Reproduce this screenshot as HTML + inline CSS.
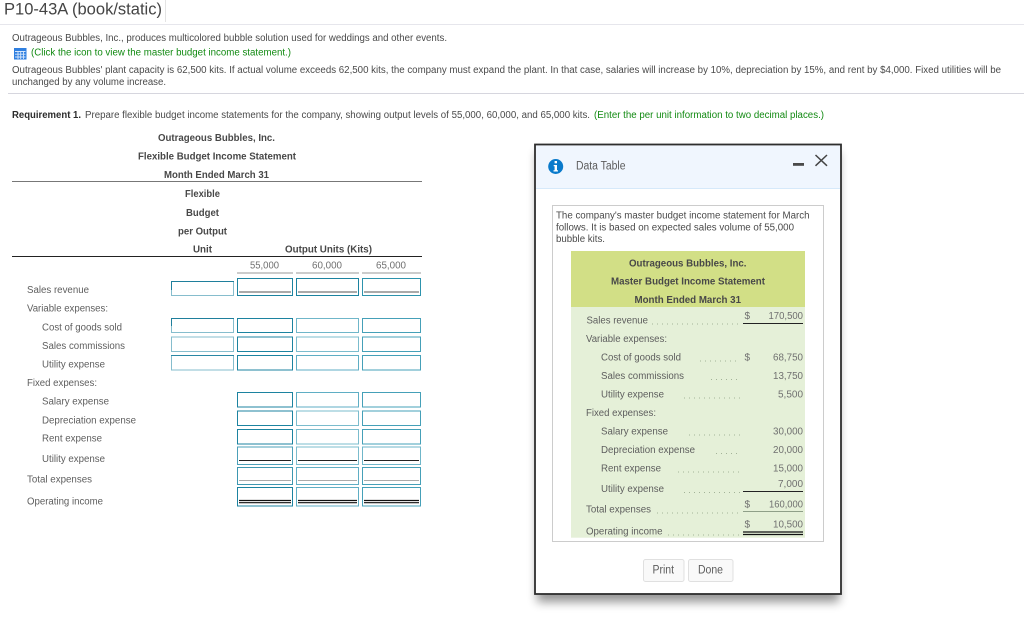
<!DOCTYPE html>
<html><head><meta charset="utf-8"><style>
html,body{margin:0;padding:0;background:#fff;width:1024px;height:640px;overflow:hidden}
svg{display:block;filter:blur(0.32px)}
text{font-family:"Liberation Sans",sans-serif;font-size:10px;fill:#4a4a4a}
.b{font-weight:bold;fill:#484848}
.g{fill:#128a12}
.l{fill:#5e5e5e}
.n{fill:#707070}
.d{stroke:#a3b398;stroke-width:1;stroke-dasharray:1 4;fill:none}
</style></head><body>
<svg width="1024" height="640" viewBox="0 0 1024 640" xmlns="http://www.w3.org/2000/svg">
<rect width="1024" height="640" fill="#fff"/>
<text x="4" y="14.5" style="font-size:17px;fill:#444" textLength="158" lengthAdjust="spacingAndGlyphs">P10-43A (book/static)</text>
<rect x="165" y="0" width="1" height="22" fill="#e4e4e4"/>
<rect x="0" y="24" width="1024" height="1" fill="#e6e6ec"/>
<text x="12" y="41" textLength="435" lengthAdjust="spacingAndGlyphs">Outrageous Bubbles, Inc., produces multicolored bubble solution used for weddings and other events.</text>
<g>
<rect x="14" y="48" width="12.500" height="11.500" fill="#2f7fe0"/>
<path d="M15 51.500H25.500M15 54.200H25.500M15 57H25.500M18 51V59M20.700 51V59M23.500 51V59" stroke="#d5e6fb" stroke-width=".9" fill="none"/>
</g>
<text class="g" x="31" y="55.500" textLength="260" lengthAdjust="spacingAndGlyphs">(Click the icon to view the master budget income statement.)</text>
<text x="12" y="73" textLength="989" lengthAdjust="spacingAndGlyphs">Outrageous Bubbles' plant capacity is 62,500 kits. If actual volume exceeds 62,500 kits, the company must expand the plant. In that case, salaries will increase by 10%, depreciation by 15%, and rent by $4,000. Fixed utilities will be</text>
<text x="12" y="85" textLength="154" lengthAdjust="spacingAndGlyphs">unchanged by any volume increase.</text>
<rect x="8" y="93" width="1016" height="1" fill="#d6d6de"/>
<text class="b" x="12" y="118" textLength="69" lengthAdjust="spacingAndGlyphs" style="fill:#2c2c2c">Requirement 1.</text>
<text x="85" y="118" textLength="505" lengthAdjust="spacingAndGlyphs">Prepare flexible budget income statements for the company, showing output levels of 55,000, 60,000, and 65,000 kits.</text>
<text class="g" x="594" y="118" textLength="230" lengthAdjust="spacingAndGlyphs">(Enter the per unit information to two decimal places.)</text>

<text class="b" x="158" y="141" textLength="117" lengthAdjust="spacingAndGlyphs">Outrageous Bubbles, Inc.</text>
<text class="b" x="138" y="159.500" textLength="158" lengthAdjust="spacingAndGlyphs">Flexible Budget Income Statement</text>
<text class="b" x="164" y="178" textLength="105" lengthAdjust="spacingAndGlyphs">Month Ended March 31</text>
<rect x="12" y="181" width="410" height="1" fill="#777"/>
<text class="b" x="185" y="197" textLength="35" lengthAdjust="spacingAndGlyphs">Flexible</text>
<text class="b" x="186" y="216" textLength="33" lengthAdjust="spacingAndGlyphs">Budget</text>
<text class="b" x="178" y="234.500" textLength="49" lengthAdjust="spacingAndGlyphs">per Output</text>
<text class="b" x="193" y="252.500" textLength="19" lengthAdjust="spacingAndGlyphs">Unit</text>
<text class="b" x="285" y="252.500" textLength="87" lengthAdjust="spacingAndGlyphs">Output Units (Kits)</text>
<rect x="12" y="256" width="410" height="1" fill="#222"/>
<text class="n" x="250" y="268.700" textLength="29" lengthAdjust="spacingAndGlyphs">55,000</text>
<text class="n" x="312" y="268.700" textLength="30" lengthAdjust="spacingAndGlyphs">60,000</text>
<text class="n" x="376" y="268.700" textLength="30" lengthAdjust="spacingAndGlyphs">65,000</text>
<path d="M237 273H293M296 273H359M362 273H421" stroke="#999" stroke-width="1"/>

<text class="l" x="27" y="293" textLength="62" lengthAdjust="spacingAndGlyphs">Sales revenue</text>
<text class="l" x="27" y="311.700" textLength="81" lengthAdjust="spacingAndGlyphs">Variable expenses:</text>
<text class="l" x="42" y="330.700" textLength="80" lengthAdjust="spacingAndGlyphs">Cost of goods sold</text>
<text class="l" x="42" y="349" textLength="83" lengthAdjust="spacingAndGlyphs">Sales commissions</text>
<text class="l" x="42" y="367.700" textLength="63" lengthAdjust="spacingAndGlyphs">Utility expense</text>
<text class="l" x="27" y="386" textLength="70" lengthAdjust="spacingAndGlyphs">Fixed expenses:</text>
<text class="l" x="42" y="404.700" textLength="67" lengthAdjust="spacingAndGlyphs">Salary expense</text>
<text class="l" x="42" y="423.300" textLength="94" lengthAdjust="spacingAndGlyphs">Depreciation expense</text>
<text class="l" x="42" y="441.700" textLength="60" lengthAdjust="spacingAndGlyphs">Rent expense</text>
<text class="l" x="42" y="462" textLength="63" lengthAdjust="spacingAndGlyphs">Utility expense</text>
<text class="l" x="27" y="482.300" textLength="65" lengthAdjust="spacingAndGlyphs">Total expenses</text>
<text class="l" x="27" y="504.300" textLength="76" lengthAdjust="spacingAndGlyphs">Operating income</text>

<g fill="none">
<rect x="171.500" y="281.500" width="62" height="14" stroke="#86bdcd"/><path d="M171 281.500H234M171.500 281V290" stroke="#1f7f9c"/>
<rect x="171.500" y="318.500" width="62" height="14" stroke="#86bdcd"/><path d="M171 318.500H234M171.500 318V326" stroke="#1f7f9c"/>
<rect x="171.500" y="337" width="62" height="14.500" stroke="#86bdcd"/>
<rect x="171.500" y="355.500" width="62" height="14.500" stroke="#86bdcd"/><path d="M171 355.500H234" stroke="#2a87a4"/>

<rect x="237.500" y="278.500" width="55" height="17" stroke="#1c83a0"/>
<rect x="296.500" y="278.500" width="62" height="17" stroke="#1c83a0"/>
<rect x="362.500" y="278.500" width="58" height="17" stroke="#2d93ad"/>
<path d="M239 292H291M298 292H357M364 292H419" stroke="#555"/>

<rect x="237.500" y="318.500" width="55" height="14" stroke="#1c83a0"/>
<rect x="296.500" y="318.500" width="62" height="14" stroke="#6fb6c9"/>
<rect x="362.500" y="318.500" width="58" height="14" stroke="#45a0b8"/>

<rect x="237.500" y="337" width="55" height="14.500" stroke="#1c83a0"/>
<rect x="296.500" y="337" width="62" height="14.500" stroke="#7bbccd"/>
<rect x="362.500" y="337" width="58" height="14.500" stroke="#45a0b8"/>

<rect x="237.500" y="355.500" width="55" height="14.500" stroke="#1c83a0"/>
<rect x="296.500" y="355.500" width="62" height="14.500" stroke="#5faec4"/>
<rect x="362.500" y="355.500" width="58" height="14.500" stroke="#45a0b8"/>

<rect x="237.500" y="392.500" width="55" height="14.500" stroke="#1c83a0"/>
<rect x="296.500" y="392.500" width="62" height="14.500" stroke="#5faec4"/>
<rect x="362.500" y="392.500" width="58" height="14.500" stroke="#45a0b8"/>

<rect x="237.500" y="411" width="55" height="14.500" stroke="#1c83a0"/>
<rect x="296.500" y="411" width="62" height="14.500" stroke="#7bbccd"/>
<rect x="362.500" y="411" width="58" height="14.500" stroke="#45a0b8"/>

<rect x="237.500" y="429.500" width="55" height="14.500" stroke="#1c83a0"/>
<rect x="296.500" y="429.500" width="62" height="14.500" stroke="#7bbccd"/>
<rect x="362.500" y="429.500" width="58" height="14.500" stroke="#45a0b8"/>

<rect x="237.500" y="447" width="55" height="17.500" stroke="#4ca0b8"/>
<rect x="296.500" y="447" width="62" height="17.500" stroke="#7bbccd"/>
<rect x="362.500" y="447" width="58" height="17.500" stroke="#6fb6c9"/>
<path d="M239 460.500H291M298 460.500H357M364 460.500H419" stroke="#222"/>

<rect x="237.500" y="467.500" width="55" height="17" stroke="#3d97b0"/>
<rect x="296.500" y="467.500" width="62" height="17" stroke="#5faec4"/>
<rect x="362.500" y="467.500" width="58" height="17" stroke="#45a0b8"/>
<path d="M239 480.500H291M298 480.500H357M364 480.500H419" stroke="#aaa"/>

<rect x="237.500" y="487.500" width="55" height="18.500" stroke="#1c83a0"/>
<rect x="296.500" y="487.500" width="62" height="18.500" stroke="#5faec4"/>
<rect x="362.500" y="487.500" width="58" height="18.500" stroke="#45a0b8"/>
<path d="M239 500.500H291M298 500.500H357M364 500.500H419M239 502.700H291M298 502.700H357M364 502.700H419" stroke="#111" stroke-width="1.200"/>
</g>

<defs><filter id="sh" x="-10%" y="-10%" width="120%" height="120%"><feGaussianBlur stdDeviation="5"/></filter></defs>
<rect x="537" y="152" width="302" height="450" fill="#000" opacity=".42" filter="url(#sh)"/>
<rect x="535" y="144.500" width="306" height="449.500" fill="#fff" stroke="#2e2e2e" stroke-width="1.800"/>
<rect x="536" y="145.500" width="304" height="42.500" fill="#f0f6fe"/>
<rect x="536" y="188" width="304" height="1" fill="#d6e9fa"/>
<circle cx="555.700" cy="166.500" r="7.500" fill="#0a7acb"/>
<rect x="554.600" y="161" width="2.400" height="2.300" fill="#fff"/>
<path d="M553.700 165H557V170.200H558V171.500H553.500V170.200H554.600V166.200H553.700Z" fill="#fff"/>
<text x="576" y="169.300" textLength="49.500" lengthAdjust="spacingAndGlyphs" style="font-size:11.500px;fill:#5c5c5c">Data Table</text>
<rect x="793" y="163" width="11" height="2.800" fill="#4a4a4a"/>
<path d="M815.500 155L827 165.800M827 155L815.500 165.800" stroke="#444" stroke-width="1.500" fill="none"/>

<rect x="552.500" y="205.500" width="271" height="336" fill="#fff" stroke="#ccc"/>
<text x="556" y="218.700" textLength="253.500" lengthAdjust="spacingAndGlyphs">The company's master budget income statement for March</text>
<text x="556" y="230.400" textLength="238" lengthAdjust="spacingAndGlyphs">follows. It is based on expected sales volume of 55,000</text>
<text x="556" y="242" textLength="49" lengthAdjust="spacingAndGlyphs">bubble kits.</text>

<rect x="571" y="251" width="234" height="56" fill="#d2df86"/>
<rect x="571" y="307" width="234" height="230.700" fill="#e5f0d8"/>
<text class="b" x="629" y="266.300" textLength="117.500" lengthAdjust="spacingAndGlyphs">Outrageous Bubbles, Inc.</text>
<text class="b" x="611" y="284.700" textLength="154" lengthAdjust="spacingAndGlyphs">Master Budget Income Statement</text>
<text class="b" x="634.500" y="303" textLength="106.500" lengthAdjust="spacingAndGlyphs">Month Ended March 31</text>

<text class="l" x="586.500" y="323.700" textLength="61.500" lengthAdjust="spacingAndGlyphs">Sales revenue</text>
<text class="l" x="586" y="342" textLength="81" lengthAdjust="spacingAndGlyphs">Variable expenses:</text>
<text class="l" x="601" y="360.700" textLength="80" lengthAdjust="spacingAndGlyphs">Cost of goods sold</text>
<text class="l" x="601" y="379" textLength="83" lengthAdjust="spacingAndGlyphs">Sales commissions</text>
<text class="l" x="601" y="397.700" textLength="63" lengthAdjust="spacingAndGlyphs">Utility expense</text>
<text class="l" x="586" y="416" textLength="70" lengthAdjust="spacingAndGlyphs">Fixed expenses:</text>
<text class="l" x="601" y="434.700" textLength="67" lengthAdjust="spacingAndGlyphs">Salary expense</text>
<text class="l" x="601" y="453" textLength="94" lengthAdjust="spacingAndGlyphs">Depreciation expense</text>
<text class="l" x="601" y="471.700" textLength="60" lengthAdjust="spacingAndGlyphs">Rent expense</text>
<text class="l" x="601" y="492" textLength="63" lengthAdjust="spacingAndGlyphs">Utility expense</text>
<text class="l" x="586" y="512.300" textLength="65" lengthAdjust="spacingAndGlyphs">Total expenses</text>
<text class="l" x="586" y="534.300" textLength="76.500" lengthAdjust="spacingAndGlyphs">Operating income</text>

<path class="d" d="M652 324H740M700 361H740M711 379.500H740M684 398H740M689 435H740M716 453.500H740M678 472H740M684 492.500H740M657 513H740M668 535H740"/>

<g class="n">
<text class="n" x="744.500" y="319">$</text>
<text class="n" x="744.500" y="360.700">$</text>
<text class="n" x="744.500" y="507.300">$</text>
<text class="n" x="744.500" y="527.700">$</text>
</g>
<text class="n" x="768.500" y="319" textLength="34.500" lengthAdjust="spacingAndGlyphs">170,500</text>
<text class="n" x="773" y="360.700" textLength="30" lengthAdjust="spacingAndGlyphs">68,750</text>
<text class="n" x="773" y="379" textLength="30" lengthAdjust="spacingAndGlyphs">13,750</text>
<text class="n" x="778" y="397.700" textLength="25" lengthAdjust="spacingAndGlyphs">5,500</text>
<text class="n" x="773" y="434.700" textLength="30" lengthAdjust="spacingAndGlyphs">30,000</text>
<text class="n" x="773" y="453" textLength="30" lengthAdjust="spacingAndGlyphs">20,000</text>
<text class="n" x="773" y="471.700" textLength="30" lengthAdjust="spacingAndGlyphs">15,000</text>
<text class="n" x="778" y="487" textLength="25" lengthAdjust="spacingAndGlyphs">7,000</text>
<text class="n" x="769" y="507.300" textLength="34" lengthAdjust="spacingAndGlyphs">160,000</text>
<text class="n" x="773" y="527.700" textLength="30" lengthAdjust="spacingAndGlyphs">10,500</text>
<path d="M743 323.500H803M743 491.500H803" stroke="#222" fill="none"/>
<path d="M743 532H803M743 534.500H803" stroke="#111" stroke-width="1.200" fill="none"/>
<path d="M743 511.500H803" stroke="#8f9f88" fill="none"/>

<rect x="643.500" y="559.500" width="40.500" height="22" rx="2" fill="#f9f9f9" stroke="#e0e0e0"/>
<rect x="688.500" y="559.500" width="44.500" height="22" rx="2" fill="#f9f9f9" stroke="#e0e0e0"/>
<text x="652.500" y="573.500" textLength="21.500" lengthAdjust="spacingAndGlyphs" style="font-size:11.500px;fill:#5c5c5c">Print</text>
<text x="698" y="573.500" textLength="25" lengthAdjust="spacingAndGlyphs" style="font-size:11.500px;fill:#5c5c5c">Done</text>
</svg>
</body></html>
